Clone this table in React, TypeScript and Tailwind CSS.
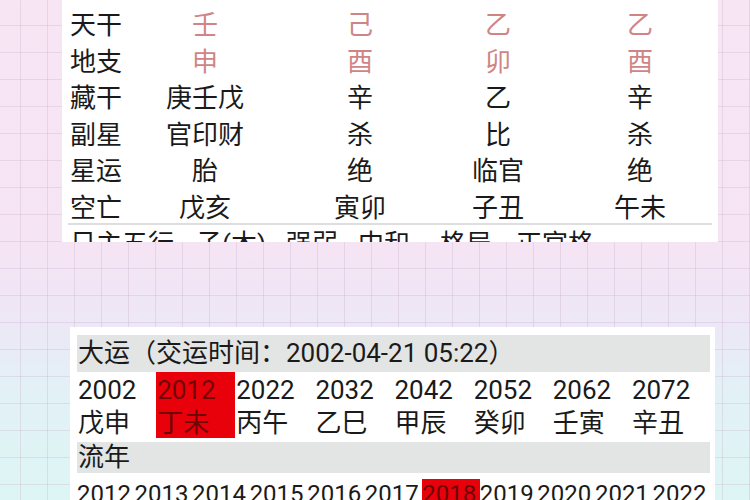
import React from 'react'

const font = "font-['Roboto','Noto_Sans_CJK_SC',sans-serif]"

const pillars = [
  { label: '天干', cells: ['壬', '己', '乙', '乙'], faded: true },
  { label: '地支', cells: ['申', '酉', '卯', '酉'], faded: true },
  { label: '藏干', cells: ['庚壬戊', '辛', '乙', '辛'] },
  { label: '副星', cells: ['官印财', '杀', '比', '杀'] },
  { label: '星运', cells: ['胎', '绝', '临官', '绝'] },
  { label: '空亡', cells: ['戊亥', '寅卯', '子丑', '午未'] },
]

const dayun = [
  ['2002', '戊申'],
  ['2012', '丁未'],
  ['2022', '丙午'],
  ['2032', '乙巳'],
  ['2042', '甲辰'],
  ['2052', '癸卯'],
  ['2062', '壬寅'],
  ['2072', '辛丑'],
]

const liunian = ['2012', '2013', '2014', '2015', '2016', '2017', '2018', '2019', '2020', '2021', '2022']

export default function App() {
  return (
    <div
      className={`w-[750px] h-[500px] overflow-hidden flex flex-col text-[#1a1a1a] ${font} [background-image:linear-gradient(to_right,rgba(195,165,195,0.28)_1px,transparent_1px),linear-gradient(to_bottom,rgba(195,165,195,0.28)_1px,transparent_1px),linear-gradient(to_bottom,#f8e5f4_0%,#f5e4f4_50%,#ede7f6_64%,#e2f1f6_78%,#ddf5f5_100%)] [background-size:27px_27px,27px_27px,100%_100%] [background-position:-7px_-2px,-7px_-2px,0_0]`}
    >
      {/* pillars card, top cut off */}
      <div className="ml-[62px] w-[656px] h-[242px] shrink-0 bg-white overflow-hidden pt-[7px]">
        {pillars.map((row) => (
          <div
            key={row.label}
            className="grid grid-cols-[66px_154px_156px_120px_164px] h-[36.6px] items-center text-[26px] leading-[36.6px]"
          >
            <span className="pl-[8px] whitespace-nowrap">{row.label}</span>
            {row.cells.map((c, i) => (
              <span
                key={i}
                className={`text-center whitespace-nowrap ${row.faded ? 'text-[#cf8585]' : ''}`}
              >
                {c}
              </span>
            ))}
          </div>
        ))}
        <div className="mx-[6px] mt-[-4px] h-[2px] bg-[#dedede]" />
        <div className="flex text-[26px] leading-[36px] whitespace-nowrap pl-[8px] mt-[1px]">
          <span>日主五行</span>
          <span className="ml-[22px]">子(木)</span>
          <span className="ml-[20px]">强弱</span>
          <span className="ml-[20px]">中和</span>
          <span className="ml-[30px]">格局</span>
          <span className="ml-[24px]">正官格</span>
        </div>
      </div>

      {/* dayun card */}
      <div className="mt-[85px] ml-[70px] w-[645px] flex-1 bg-white pt-[8px] pl-[7px] pr-[5px]">
        <div className="h-[37px] bg-[#e2e5e3] text-[26px] leading-[37px] pl-[1px] whitespace-nowrap">
          大运（交运时间：2002-04-21 05:22）
        </div>
        <div className="grid grid-cols-8 text-[26px] leading-[33px]">
          {dayun.map(([y, gz], i) => (
            <div
              key={y}
              className={`flex flex-col pl-[1px] pt-[2px] h-[66px] ${i === 1 ? 'bg-[#e8000b] text-[#6e0606]' : ''}`}
            >
              <span>{y}</span>
              <span>{gz}</span>
            </div>
          ))}
        </div>
        <div className="mt-[4px] h-[31px] bg-[#e2e5e3] text-[26px] leading-[31px] pl-[1px]">流年</div>
        <div className="grid grid-cols-11 mt-[6px] text-[24px] leading-[30px]">
          {liunian.map((y) => (
            <span key={y} className={y === '2018' ? 'bg-[#e8000b] text-[#6e0606]' : ''}>
              {y}
            </span>
          ))}
        </div>
      </div>
    </div>
  )
}
